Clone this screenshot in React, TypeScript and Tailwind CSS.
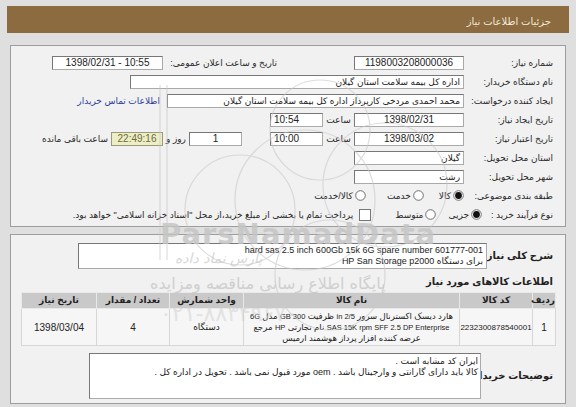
import React from 'react';

const font = "font-['Liberation_Sans','DejaVu_Sans',sans-serif]";

const Box: React.FC<{ className?: string; children?: React.ReactNode }> = ({ className = '', children }) => (
  <div
    className={`h-[14px] shrink-0 border border-[#777] border-r-[#aaa] border-b-[#aaa] bg-white px-[3px] leading-[12px] text-[#222] whitespace-nowrap overflow-hidden ${className}`}
  >
    {children}
  </div>
);

const Radio: React.FC<{ checked?: boolean }> = ({ checked }) => (
  <svg width="11" height="11" viewBox="0 0 11 11" className="shrink-0">
    <circle cx="5.5" cy="5.5" r="4.8" fill="#fff" stroke="#6f6f6f" strokeWidth="1" />
    {checked && <circle cx="5.5" cy="5.5" r="3.4" fill="#111" />}
  </svg>
);

const Row: React.FC<{ children: React.ReactNode }> = ({ children }) => (
  <div className="flex h-[19px] items-center">{children}</div>
);

const Label: React.FC<{ className?: string; children: React.ReactNode }> = ({ className = 'w-[89px]', children }) => (
  <div className={`shrink-0 text-[9px] leading-[12px] text-[#2a2a2a] whitespace-nowrap ${className}`}>{children}</div>
);

// latin runs inside the persian item name are set a little smaller
const Lat: React.FC<{ children: React.ReactNode }> = ({ children }) => (
  <span className="text-[7.5px]">{children}</span>
);

// faint site watermark drawn over the page
const Watermark: React.FC = () => (
  <div className="pointer-events-none absolute inset-0 overflow-hidden">
    <svg className="absolute left-[130px] top-[60px]" width="330" height="300" viewBox="0 0 330 300" fill="none">
      <g stroke="#c9c9c9" strokeWidth="1.2" opacity="0.6">
        <circle cx="175" cy="140" r="70" />
        <circle cx="110" cy="150" r="55" />
        <circle cx="255" cy="125" r="62" />
        <circle cx="190" cy="70" r="50" />
        <circle cx="200" cy="215" r="55" />
        <line x1="30" y1="25" x2="30" y2="200" />
        <line x1="37" y1="25" x2="37" y2="200" />
      </g>
    </svg>
    <div className="absolute left-[160px] top-[222px] text-[29px] font-bold leading-[24px] tracking-[1px] text-[#c4c4c4] opacity-80 font-['DejaVu_Sans',sans-serif]">
      ParsNamadData
    </div>
    <div dir="rtl" className="absolute left-[175px] top-[249px] text-[14px] leading-[18px] text-[#c9c9c9] opacity-70 italic font-['DejaVu_Sans',sans-serif]">
      پارس نماد داده
    </div>
    <div dir="rtl" className="absolute left-[150px] top-[274px] text-[16px] leading-[20px] text-[#c2c2c2] opacity-70 font-['DejaVu_Sans',sans-serif]">
      پایگاه اطلاع رسانی مناقصه ومزایده
    </div>
    <div className="absolute left-[160px] top-[302px] text-[22px] leading-[24px] text-[#cfcfcf] opacity-50 font-['DejaVu_Sans',sans-serif]">
      ۰۲۱-۸۸۳۴۹۶۷۰
    </div>
  </div>
);

export default function App() {
  return (
    <div className={`relative h-[407px] w-[576px] overflow-hidden bg-[#dfdfdf] pt-[6px] ${font}`}>
      <div dir="rtl" className="mx-[7px] flex h-[27px] items-end bg-[#8b6b3f] pb-[5px] pr-[18px]">
        <span className="text-[10px] leading-[12px] text-[#f3ead8]">جزئیات اطلاعات نیاز</span>
      </div>

      <div dir="rtl" className="mx-[10px] mt-[12px] h-[182px] border border-[#9d9d9d] bg-[#f1f1f1] pr-[12px] pt-[7px]">
        <Row>
          <Label>شماره نیاز:</Label>
          <Box className="w-[110px] text-center text-[10px]">1198003208000036</Box>
          <Label className="mr-[77px] w-[114px]">تاریخ و ساعت اعلان عمومی:</Label>
          <Box className="w-[111px] text-center text-[10px]">
            <span dir="ltr">1398/02/31 - 10:55</span>
          </Box>
        </Row>
        <Row>
          <Label>نام دستگاه خریدار:</Label>
          <Box className="w-[334px] text-[9px]">اداره کل بیمه سلامت استان گیلان</Box>
        </Row>
        <Row>
          <Label>ایجاد کننده درخواست:</Label>
          <Box className="w-[297px] text-[9px]">محمد احمدی مردخی کارپرداز اداره کل بیمه سلامت استان گیلان</Box>
          <a className="mr-[7px] text-[9px] leading-[12px] text-[#2e3b9c] whitespace-nowrap">اطلاعات تماس خریدار</a>
        </Row>
        <Row>
          <Label>تاریخ ایجاد نیاز:</Label>
          <Box className="w-[110px] text-center text-[10px]">1398/02/31</Box>
          <Label className="w-[31px] text-center">ساعت</Label>
          <Box className="w-[53px] text-left text-[10px]">10:54</Box>
        </Row>
        <Row>
          <Label>تاریخ اعتبار نیاز:</Label>
          <Box className="w-[110px] text-center text-[10px]">1398/03/02</Box>
          <Label className="w-[31px] text-center">ساعت</Label>
          <Box className="w-[53px] text-left text-[10px]">10:00</Box>
          <Box className="mr-[28px] w-[53px] text-center text-[10px]">1</Box>
          <Label className="w-[26px] text-center">روز و</Label>
          <div className="h-[14px] w-[52px] shrink-0 border border-[#9a9a78] bg-[#eeeec6] text-center text-[10px] leading-[12px] text-[#6b6b3c]">
            22:49:16
          </div>
          <Label className="mr-[3px]">ساعت باقی مانده</Label>
        </Row>
        <Row>
          <Label>استان محل تحویل:</Label>
          <Box className="w-[110px] text-[9px]">گیلان</Box>
        </Row>
        <Row>
          <Label>شهر محل تحویل:</Label>
          <Box className="w-[110px] text-[9px]">رشت</Box>
        </Row>
        <Row>
          <Label>طبقه بندی موضوعی:</Label>
          <Radio checked />
          <Label className="mr-[2px]">کالا</Label>
          <div className="mr-[15px]">
            <Radio />
          </div>
          <Label className="mr-[2px]">خدمت</Label>
          <div className="mr-[21px]">
            <Radio />
          </div>
          <Label className="mr-[2px]">کالا/خدمت</Label>
        </Row>
        <Row>
          <Label className="w-[71px]">نوع فرآیند خرید :</Label>
          <Radio checked />
          <Label className="mr-[2px]">جزیی</Label>
          <div className="mr-[12px]">
            <Radio />
          </div>
          <Label className="mr-[2px]">متوسط</Label>
          <div className="mr-[24px] h-[12px] w-[12px] shrink-0 border border-[#777] bg-white" />
          <Label className="mr-[6px]">پرداخت تمام یا بخشی از مبلغ خرید،از محل "اسناد خزانه اسلامی" خواهد بود.</Label>
        </Row>
      </div>

      <div dir="rtl" className="mx-[10px] mt-[7px] h-[170px] border border-[#9d9d9d] bg-[#f1f1f1] pl-[11px] pr-[9px] pt-[8px]">
        <div className="flex items-center">
          <div className="mr-[3px] w-[66px] shrink-0 text-[10px] font-bold leading-[14px] text-[#222] whitespace-nowrap">شرح کلی نیاز:</div>
          <div className="h-[26px] w-[409px] border border-[#777] border-r-[#aaa] border-b-[#aaa] bg-white px-[3px] pt-[1px] text-[9px] leading-[11px] text-[#222]">
            <div dir="ltr" className="text-right">hard sas 2.5 inch 600Gb 15k 6G spare number 601777-001</div>
            <div>برای دستگاه  HP San Storage p2000</div>
          </div>
        </div>
        <div className="mr-[3px] mt-[6px] h-[16px] text-[10px] font-bold leading-[14px] text-[#222]">اطلاعات کالاهای مورد نیاز</div>
        <table className="mt-[1px] w-[534px] table-fixed border-collapse text-[9px] leading-[11px] text-[#222]">
          <colgroup>
            <col className="w-[23px]" />
            <col className="w-[73px]" />
            <col className="w-[216px]" />
            <col className="w-[74px]" />
            <col className="w-[73px]" />
            <col className="w-[75px]" />
          </colgroup>
          <thead>
            <tr className="h-[16px] bg-[#c9c9c9]">
              <th className="border border-[#e9e9e9] font-bold">ردیف</th>
              <th className="border border-[#e9e9e9] font-bold">کد کالا</th>
              <th className="border border-[#e9e9e9] font-bold">نام کالا</th>
              <th className="border border-[#e9e9e9] font-bold">واحد شمارش</th>
              <th className="border border-[#e9e9e9] font-bold">تعداد / مقدار</th>
              <th className="border border-[#e9e9e9] font-bold">تاریخ نیاز</th>
            </tr>
          </thead>
          <tbody>
            <tr className="h-[37px] bg-[#f6f6f6] text-center">
              <td className="border border-[#d6d6d6] text-[10px]">1</td>
              <td className="border border-[#d6d6d6] text-[8px]">2232300878540001</td>
              <td className="overflow-hidden border border-[#d6d6d6] px-[1px] text-[8.5px] leading-[11px]">
                <div className="whitespace-nowrap">
                  هارد دیسک اکسترنال سرور <Lat>in 2/5</Lat> ظرفیت <Lat>GB 300</Lat> مدل <Lat>6G</Lat>
                </div>
                <div className="whitespace-nowrap">
                  <Lat>SAS 15K rpm SFF 2.5 DP Enterprise</Lat> نام تجارتی <Lat>HP</Lat> مرجع
                </div>
                <div className="whitespace-nowrap">عرضه کننده افزار پرداز هوشمند ارمیس</div>
              </td>
              <td className="border border-[#d6d6d6]">دستگاه</td>
              <td className="border border-[#d6d6d6] text-[10px]">4</td>
              <td className="border border-[#d6d6d6] text-[10px]">1398/03/04</td>
            </tr>
          </tbody>
        </table>
        <div className="mt-[7px] flex items-center">
          <div className="mr-[3px] w-[72px] shrink-0 text-[10px] font-bold leading-[14px] text-[#222] whitespace-nowrap">توضیحات خریدار:</div>
          <div className="h-[46px] w-[392px] border border-[#777] border-r-[#aaa] border-b-[#aaa] bg-white px-[2px] pt-[2px] text-[9px] leading-[11px] text-[#222]">
            <div>ایران کد مشابه است .</div>
            <div>کالا باید دارای گارانتی و وارجینال باشد . oem  مورد قبول نمی باشد . تحویل در اداره کل .</div>
          </div>
        </div>
      </div>

      <Watermark />
    </div>
  );
}
